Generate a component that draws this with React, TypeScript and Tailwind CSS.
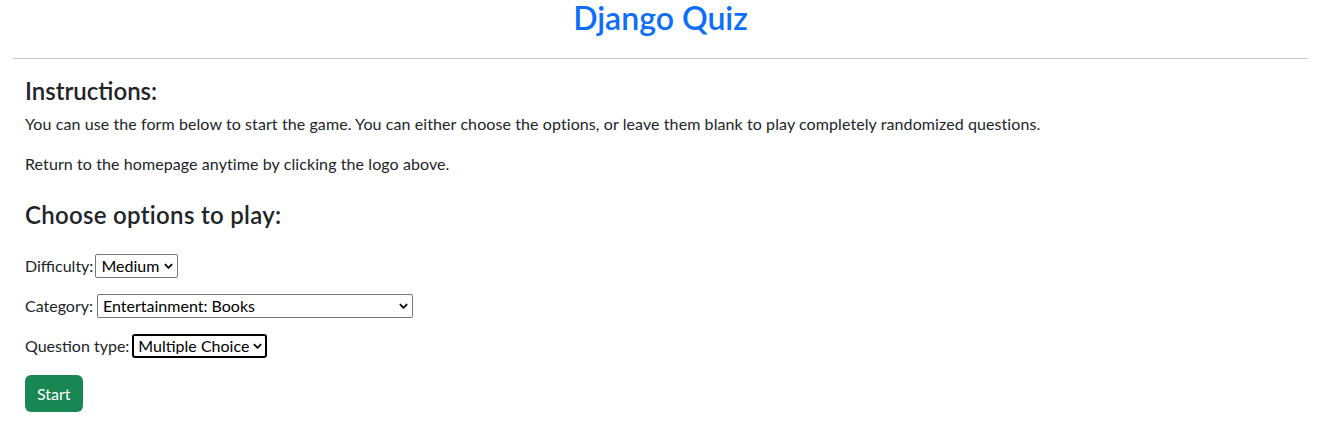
import { useState } from "react";

const difficulties = ["Any", "Easy", "Medium", "Hard"];
const categories = ["Any", "General Knowledge", "Entertainment: Books", "Entertainment: Film", "Science & Nature"];
const types = ["Any", "Multiple Choice", "True / False"];

function Chevron() {
  return (
    <svg
      viewBox="0 0 10 6"
      className="pointer-events-none absolute right-[5px] top-1/2 h-[6px] w-[9px] -translate-y-1/2"
      fill="none"
      stroke="#000"
      strokeWidth="2"
    >
      <path d="M1 1l4 4 4-4" />
    </svg>
  );
}

type SelectProps = {
  value: string;
  options: string[];
  onChange: (v: string) => void;
  width: string;
  focused?: boolean;
};

function NativeSelect({ value, options, onChange, width, focused }: SelectProps) {
  return (
    <div className={`relative inline-block h-[24px] ${width}`}>
      <select
        value={value}
        onChange={(e) => onChange(e.target.value)}
        className={
          focused
            ? "h-full w-full appearance-none rounded-[3px] border-2 border-black bg-white pl-[4px] pr-4 text-[16px] leading-none text-black outline-none"
            : "h-full w-full appearance-none rounded-[2px] border border-[#767676] bg-white pl-[5px] pr-4 text-[16px] leading-none text-black outline-none"
        }
      >
        {options.map((o) => (
          <option key={o}>{o}</option>
        ))}
      </select>
      <Chevron />
    </div>
  );
}

export default function App() {
  const [difficulty, setDifficulty] = useState("Medium");
  const [category, setCategory] = useState("Entertainment: Books");
  const [type, setType] = useState("Multiple Choice");

  return (
    <div className="min-h-[439px] bg-white font-['Lato',sans-serif] text-[#212529]">
      <header className="text-center">
        <h1 className="text-[32px] font-semibold leading-[36px] text-[#0d6efd]">Django Quiz</h1>
      </header>

      <div className="px-[13px]">
        <hr className="mt-[22px] border-t border-[#c8c9ca]" />
      </div>

      <main className="px-[25px] tracking-[0.09px]">
        <h4 className="mt-[17px] text-[24px] font-semibold leading-[29px] tracking-normal">Instructions:</h4>
        <p className="mt-[7px] text-[16px] leading-[24px]">
          You can use the form below to start the game. You can either choose the options, or leave them blank to play
          completely randomized questions.
        </p>
        <p className="mt-[16px] text-[16px] leading-[24px]">Return to the homepage anytime by clicking the logo above.</p>

        <h4 className="mt-[24px] text-[24px] font-semibold leading-[29px] tracking-[0.3px]">Choose options to play:</h4>

        <form className="mt-[25px] flex flex-col items-start gap-[16px] text-[16px] tracking-normal">
          <div className="flex h-[24px] items-center gap-[2px]">
            <label>Difficulty:</label>
            <NativeSelect value={difficulty} options={difficulties} onChange={setDifficulty} width="w-[83px]" />
          </div>
          <div className="flex h-[24px] items-center gap-[4px]">
            <label>Category:</label>
            <NativeSelect value={category} options={categories} onChange={setCategory} width="w-[316px]" />
          </div>
          <div className="flex h-[24px] items-center gap-[3px]">
            <label>Question type:</label>
            <NativeSelect value={type} options={types} onChange={setType} width="w-[135px]" focused />
          </div>
          <button
            type="button"
            className="mt-[1px] h-[37px] rounded-[6px] bg-[#198754] px-[12px] text-[16px] leading-[24px] text-white"
          >
            Start
          </button>
        </form>
      </main>
    </div>
  );
}
